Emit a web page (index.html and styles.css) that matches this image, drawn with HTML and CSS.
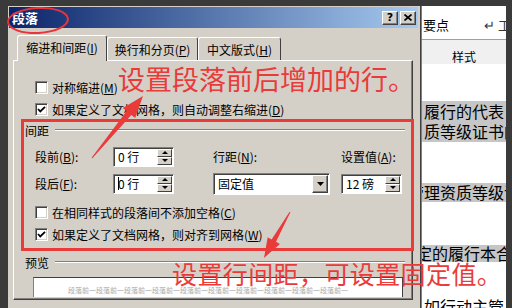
FILE: index.html
```html
<!DOCTYPE html>
<html lang="zh-CN">
<head>
    <meta charset="UTF-8">
    <meta name="viewport" content="width=device-width, initial-scale=1.0">
    <title>段落</title>
    <link rel="stylesheet" href="styles.css">
</head>
<body>
<div class="screen">
    <div class="dialog">
        <div class="titlebar">
            <span class="title">段落</span>
            <span class="tbtn">?</span>
            <span class="tbtn">
                <svg width="8" height="7" viewBox="0 0 8 7"><path d="M0.5 0.5 L7.5 6.5 M7.5 0.5 L0.5 6.5" stroke="#000" stroke-width="1.7" fill="none"/></svg>
            </span>
        </div>
        <div class="tabs">
            <div class="tab active t1">缩进和间距(<u>I</u>)</div>
            <div class="tab t2">换行和分页(<u>P</u>)</div>
            <div class="tab t3">中文版式(<u>H</u>)</div>
        </div>
        <div class="panel">
            <div class="check"><span class="box"></span>对称缩进(<u>M</u>)</div>
            <div class="check"><span class="box"><svg width="11" height="11" viewBox="0 0 11 11"><path d="M2 5 L4.3 7.5 L9 2.8" stroke="#000" stroke-width="1.8" fill="none"/></svg></span>如果定义了文档网格，则自动调整右缩进(<u>D</u>)</div>
            <div class="group"><span>间距</span><i class="groove"></i></div>
            <div class="spacing">
                <span>段前(<u>B</u>):</span>
                <div class="spin">
                    <span class="spin-text">0 行</span>
                    <span class="spin-btns"><b class="up"></b><b class="down"></b></span>
                </div>
                <span>行距(<u>N</u>):</span>
                <span>设置值(<u>A</u>):</span>
                <span>段后(<u>F</u>):</span>
                <div class="spin">
                    <span class="spin-text"><i class="caret"></i>0 行</span>
                    <span class="spin-btns"><b class="up"></b><b class="down"></b></span>
                </div>
                <div class="select">
                    <span class="select-text">固定值</span>
                    <span class="select-btn">
                        <svg width="7" height="4" viewBox="0 0 7 4"><path d="M0 0 H7 L3.5 4 Z" fill="#000"/></svg>
                    </span>
                </div>
                <div class="spin">
                    <span class="spin-text">12 磅</span>
                    <span class="spin-btns"><b class="up"></b><b class="down"></b></span>
                </div>
            </div>
            <div class="check gap-a"><span class="box"></span>在相同样式的段落间不添加空格(<u>C</u>)</div>
            <div class="check"><span class="box"><svg width="11" height="11" viewBox="0 0 11 11"><path d="M2 5 L4.3 7.5 L9 2.8" stroke="#000" stroke-width="1.8" fill="none"/></svg></span>如果定义了文档网格，则对齐到网格(<u>W</u>)</div>
            <div class="group gap-b"><span>预览</span><i class="groove"></i></div>
            <div class="preview"><span>段落前一段落前一段落前一段落前一段落前一段落前一段落前一段落前一段落前一段落前一</span></div>
        </div>
    </div>
    <div class="doc">
        <div class="doc-head"><span>要点</span><span class="mark">↵ 工</span></div>
        <div class="doc-style">样式</div>
        <div class="hl hl-1">履行的代表，<br>质等级证书的</div>
        <div class="hl hl-2">管理资质等级证</div>
        <div class="hl hl-3">定的履行本合</div>
        <div class="doc-tail">如行动主管</div>
    </div>

    <div class="ann ring"></div>
    <div class="ann frame"></div>
    <div class="ann note note-top">设置段落前后增加的行。</div>
    <div class="ann note note-bottom">设置行间距，可设置固定值。</div>
    <svg class="ann arrows" width="512" height="308" viewBox="0 0 512 308">
        <polygon points="143,96 135.2,118.1 131.3,114.9 92.4,158.3 91.6,157.7 126.7,111.1 122.8,107.9" fill="#ea3b3b"/>
        <polygon points="264,258 267.7,237.2 271.6,239.4 289.6,211.8 290.4,212.2 276,241.8 279.9,244" fill="#ea3b3b"/>
    </svg>
</div>
</body>
</html>
```

FILE: styles.css
```css
body {
    margin: 0;
    font-family: "Noto Sans CJK SC", "Liberation Sans", sans-serif;
    font-size: 12px;
    color: #000;
}
u {
    text-decoration: underline;
}
.screen {
    position: relative;
    width: 512px;
    height: 308px;
    box-sizing: border-box;
    padding: 6px 6px 0 8px;
    background: #3a3a3a;
    display: flex;
    overflow: hidden;
}

/* dialog */
.dialog {
    width: 413px;
    box-sizing: border-box;
    padding: 1px 2px 0 1px;
    background: #d4d0c8;
    border-right: 1px solid #404040;
}
.titlebar {
    height: 21px;
    display: flex;
    align-items: center;
    padding: 0 2px 0 3px;
    background: linear-gradient(to right, #0a246a, #a6caf0);
    color: #fff;
}
.title {
    flex: 1;
    font-weight: bold;
    font-size: 13px;
    line-height: 21px;
}
.tbtn {
    width: 16px;
    height: 14px;
    margin-left: 2px;
    box-sizing: border-box;
    background: #d4d0c8;
    border: 1px solid;
    border-color: #fff #404040 #404040 #fff;
    box-shadow: inset -1px -1px #808080;
    color: #000;
    font: bold 11px/12px "DejaVu Sans", sans-serif;
    display: flex;
    align-items: center;
    justify-content: center;
}
.tabs {
    height: 32px;
    box-sizing: border-box;
    padding-left: 8px;
    display: flex;
    align-items: flex-end;
}
.tab {
    height: 23px;
    box-sizing: border-box;
    border: 1px solid;
    border-color: #fff #404040 transparent #fff;
    border-bottom: none;
    border-radius: 3px 3px 0 0;
    display: flex;
    align-items: center;
    justify-content: center;
    background: #d4d0c8;
}
.tab.active {
    height: 26px;
    margin-bottom: -1px;
    position: relative;
    z-index: 1;
    padding-bottom: 3px;
}
.t1 { width: 90px; }
.t2 { width: 91px; }
.t3 { width: 83px; }

.panel {
    height: 240px;
    box-sizing: border-box;
    margin: 0 5px 0 4px;
    padding: 15px 7px 0 21px;
    border: 1px solid;
    border-color: #fff #404040 #404040 #fff;
    box-shadow: inset -1px -1px #808080;
}
.check {
    height: 22px;
    display: flex;
    align-items: center;
    white-space: nowrap;
}
.box {
    width: 13px;
    height: 13px;
    box-sizing: border-box;
    margin-right: 4px;
    background: #fff;
    border: 1px solid;
    border-color: #808080 #fff #fff #808080;
    box-shadow: inset 1px 1px #404040, inset -1px -1px #d4d0c8;
    display: flex;
}
.group {
    height: 20px;
    margin-left: -10px;
    display: flex;
    align-items: center;
    gap: 6px;
}
.groove {
    flex: 1;
    border-top: 1px solid #808080;
    border-bottom: 1px solid #fff;
}
.gap-a { margin-top: 4px; }
.gap-b { margin-top: 7px; }

.spacing {
    margin-top: 3px;
    display: grid;
    grid-template-columns: 78px 100px 128px 61px;
    grid-template-rows: 27px 27px;
    align-items: center;
}
.spin, .select {
    height: 20px;
    box-sizing: border-box;
    display: flex;
    background: #fff;
    border: 1px solid;
    border-color: #808080 #fff #fff #808080;
    box-shadow: inset 1px 1px #404040;
}
.spin { width: 61px; }
.select { width: 117px; height: 22px; }
.spin-text, .select-text {
    flex: 1;
    padding-left: 4px;
    display: flex;
    align-items: center;
}
.caret {
    width: 1px;
    height: 13px;
    background: #000;
    margin-right: -1px;
}
.spin-btns {
    width: 15px;
    padding: 1px 1px 1px 0;
    display: flex;
    flex-direction: column;
}
.spin-btns b, .select-btn {
    flex: 1;
    box-sizing: border-box;
    background: #d4d0c8;
    border: 1px solid;
    border-color: #fff #404040 #404040 #fff;
    display: flex;
    align-items: center;
    justify-content: center;
}
.select-btn {
    flex: none;
    width: 16px;
    margin: 1px 1px 1px 0;
    box-shadow: inset -1px -1px #808080;
}
.up::before, .down::before {
    content: "";
    border-left: 3px solid transparent;
    border-right: 3px solid transparent;
}
.up::before { border-bottom: 3px solid #000; }
.down::before { border-top: 3px solid #000; }
.preview {
    margin: 5px 0 0 -2px;
    width: 370px;
    height: 20px;
    box-sizing: border-box;
    background: #fff;
    border-top: 1px solid #404040;
    border-left: 1px solid #808080;
    border-right: 1px solid #404040;
    padding: 8px 0 0 34px;
    overflow: hidden;
    white-space: nowrap;
    color: #a8a8a8;
    font-size: 7px;
    line-height: 8px;
}

/* document behind the dialog */
.doc {
    flex: 1;
    background: #fff;
    border-left: 1px solid #808080;
    overflow: hidden;
    font-size: 16px;
    white-space: nowrap;
}
.doc-head {
    height: 34px;
    box-sizing: border-box;
    border-bottom: 1px solid #a0a0a0;
    padding: 0 0 5px 1px;
    display: flex;
    align-items: flex-end;
    justify-content: space-between;
    font-size: 13px;
}
.mark {
    margin-right: -5px;
    color: #333;
}
.doc-style {
    height: 24px;
    box-sizing: border-box;
    padding-top: 11px;
    background: #f0f0f0;
    text-align: center;
    font-size: 12px;
    line-height: 12px;
}
.hl {
    background: #c6c6c6;
}
.hl-1 {
    margin-top: 37px;
    height: 41px;
    line-height: 20px;
    padding-left: 2px;
}
.hl-2 {
    margin-top: 41px;
    height: 19px;
    line-height: 19px;
    text-indent: -14px;
}
.hl-3 {
    margin-top: 43px;
    height: 17px;
    line-height: 17px;
    text-indent: -6px;
}
.doc-tail {
    margin-top: 34px;
    line-height: 20px;
    padding-left: 2px;
}

/* red annotations drawn over the screenshot */
.ann {
    position: absolute;
    pointer-events: none;
}
.ring {
    left: 7px;
    top: 7px;
    width: 58px;
    height: 23px;
    border: 2px solid #e8343a;
    border-radius: 50%;
    transform: rotate(-3deg);
}
.frame {
    left: 21px;
    top: 119px;
    width: 387px;
    height: 126px;
    border: 3px solid #ea3b3b;
}
.note {
    color: #ea3b3b;
    line-height: 1;
    white-space: nowrap;
}
.note-top {
    left: 118px;
    top: 65px;
    font-size: 27px;
}
.note-bottom {
    left: 172px;
    top: 261px;
    font-size: 25px;
    letter-spacing: 0.4px;
}
.arrows {
    left: 0;
    top: 0;
}
```
